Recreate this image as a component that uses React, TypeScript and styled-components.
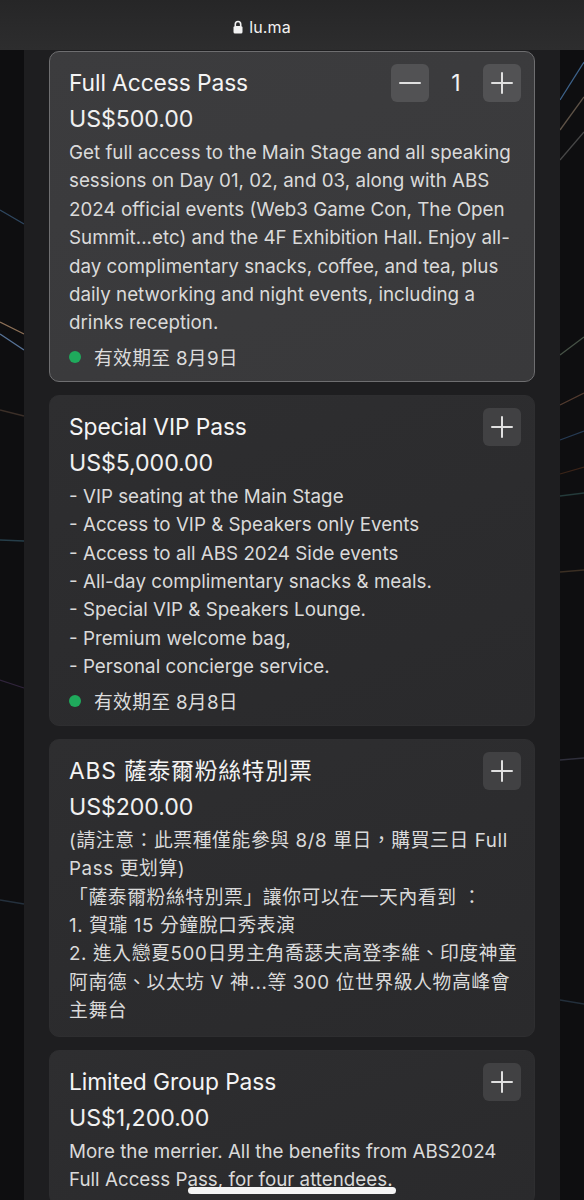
import React from "react";
import styled, { createGlobalStyle } from "styled-components";

const GlobalStyle = createGlobalStyle`
  html, body {
    margin: 0;
    padding: 0;
    background: #0f0f11;
  }
  body {
    font-family: Inter, "Noto Sans", "Noto Sans CJK TC", sans-serif;
    -webkit-font-smoothing: antialiased;
  }
`;

const Page = styled.div`
  position: relative;
  width: 584px;
  height: 1200px;
  overflow: hidden;
  background: #0e0e10;
`;

const Streaks = styled.svg`
  position: absolute;
  top: 0;
  left: 0;
  width: 584px;
  height: 1200px;
  z-index: 0;
`;

const Content = styled.div`
  position: relative;
  z-index: 1;
  display: flex;
  flex-direction: column;
  height: 100%;
`;

const AddressBar = styled.div`
  height: 50px;
  flex-shrink: 0;
  background: linear-gradient(180deg, #262627 0%, #2d2d2e 100%);
  display: flex;
  align-items: center;
  justify-content: center;
  gap: 6px;
  padding: 4px 60px 0 0;
  box-sizing: border-box;
  color: #f2f2f2;
  font-family: Inter, "Liberation Sans", sans-serif;
  font-size: 16px;
  letter-spacing: 0.1px;
`;

const Column = styled.div`
  flex: 1;
  margin: 0 24px;
  background: #1e1e20;
  padding: 1px 25px 0;
  display: flex;
  flex-direction: column;
  gap: 13px;
`;

const Card = styled.div<{ $active?: boolean }>`
  border-radius: 10px;
  padding: 16px 13px 10px 19px;
  background: ${(p) =>
    p.$active
      ? "linear-gradient(160deg, #3c3c3e 0%, #39393b 100%)"
      : "linear-gradient(160deg, #2e2e30 0%, #2a2a2c 100%)"};
  border: 1px solid ${(p) => (p.$active ? "#6e6e70" : "#2e2e30")};
  color: #e6e6e6;
`;

const Header = styled.div`
  display: flex;
  justify-content: space-between;
  align-items: flex-start;
  height: 30px;
`;

const Title = styled.div<{ $cjk?: boolean }>`
  font-size: 22.8px;
  line-height: 30px;
  color: #f4f4f4;
  letter-spacing: ${(p) => (p.$cjk ? "0.8px" : "-0.1px")};
`;

const Stepper = styled.div`
  display: flex;
  align-items: center;
  margin-top: -4px;
`;

const StepButton = styled.div<{ $active?: boolean }>`
  width: 38px;
  height: 38px;
  border-radius: 6px;
  background: ${(p) => (p.$active ? "#525254" : "#414143")};
  display: flex;
  align-items: center;
  justify-content: center;
`;

const Count = styled.div`
  width: 54px;
  text-align: center;
  font-size: 23px;
  color: #f2f2f2;
`;

const Price = styled.div`
  font-size: 23.2px;
  line-height: 32px;
  margin-top: 5px;
  color: #f0f0f0;
  letter-spacing: -0.1px;
`;

const Body = styled.div<{ $cjk?: boolean }>`
  margin-top: 4px;
  font-size: 18.8px;
  line-height: 28.4px;
  color: #dadada;
  padding-right: 4px;
  white-space: nowrap;
  letter-spacing: ${(p) => (p.$cjk ? "0.6px" : "0")};
`;

const Line = styled.div``;

const Status = styled.div`
  display: flex;
  align-items: center;
  gap: 13px;
  margin-top: 5px;
  height: 28px;
  font-size: 18.8px;
  color: #dcdcdc;
  letter-spacing: 0.3px;
`;

const Dot = styled.span`
  width: 12px;
  height: 12px;
  border-radius: 50%;
  background: #1faa5c;
`;

const HomeIndicator = styled.div`
  position: absolute;
  left: 188px;
  bottom: 6px;
  width: 208px;
  height: 7px;
  border-radius: 4px;
  background: #f4f4f4;
  z-index: 2;
`;

const PlusIcon = () => (
  <svg width="22" height="22" viewBox="0 0 22 22">
    <path d="M11 1v20M1 11h20" stroke="#e0e0e0" strokeWidth="2" strokeLinecap="round" />
  </svg>
);

const MinusIcon = () => (
  <svg width="22" height="22" viewBox="0 0 22 22">
    <path d="M1 11h20" stroke="#e0e0e0" strokeWidth="2" strokeLinecap="round" />
  </svg>
);

const LockIcon = () => (
  <svg width="10" height="14" viewBox="0 0 10 14">
    <path d="M2.3 6V4.2a2.7 2.7 0 0 1 5.4 0V6" fill="none" stroke="#f2f2f2" strokeWidth="1.6" />
    <rect x="0.5" y="6" width="9" height="7.5" rx="1.5" fill="#f2f2f2" />
  </svg>
);

interface Ticket {
  title: string;
  price: string;
  lines: string[];
  valid?: string;
  count?: number;
  cjk?: boolean;
}

const tickets: Ticket[] = [
  {
    title: "Full Access Pass",
    price: "US$500.00",
    count: 1,
    lines: [
      "Get full access to the Main Stage and all speaking",
      "sessions on Day 01, 02, and 03, along with ABS",
      "2024 official events (Web3 Game Con, The Open",
      "Summit...etc) and the 4F Exhibition Hall. Enjoy all-",
      "day complimentary snacks, coffee, and tea, plus",
      "daily networking and night events, including a",
      "drinks reception.",
    ],
    valid: "有效期至 8月9日",
  },
  {
    title: "Special VIP Pass",
    price: "US$5,000.00",
    lines: [
      "- VIP seating at the Main Stage",
      "- Access to VIP & Speakers only Events",
      "- Access to all ABS 2024 Side events",
      "- All-day complimentary snacks & meals.",
      "- Special VIP & Speakers Lounge.",
      "- Premium welcome bag,",
      "- Personal concierge service.",
    ],
    valid: "有效期至 8月8日",
  },
  {
    title: "ABS 薩泰爾粉絲特別票",
    price: "US$200.00",
    cjk: true,
    lines: [
      "(請注意：此票種僅能參與 8/8 單日，購買三日 Full",
      "Pass 更划算)",
      "「薩泰爾粉絲特別票」讓你可以在一天內看到 ：",
      "1. 賀瓏 15 分鐘脫口秀表演",
      "2. 進入戀夏500日男主角喬瑟夫高登李維、印度神童",
      "阿南德、以太坊 V 神...等 300 位世界級人物高峰會",
      "主舞台",
    ],
  },
  {
    title: "Limited Group Pass",
    price: "US$1,200.00",
    lines: [
      "More the merrier. All the benefits from ABS2024",
      "Full Access Pass, for four attendees.",
    ],
  },
];

const streaks = [
  { x1: 0, y1: 210, x2: 24, y2: 224, c: "#3a5a7a" },
  { x1: 0, y1: 322, x2: 24, y2: 334, c: "#b89270" },
  { x1: 0, y1: 334, x2: 24, y2: 350, c: "#7096c6" },
  { x1: 0, y1: 410, x2: 24, y2: 416, c: "#4a3a30" },
  { x1: 0, y1: 540, x2: 24, y2: 541, c: "#2e4f5e" },
  { x1: 0, y1: 680, x2: 24, y2: 688, c: "#3c2c4a" },
  { x1: 0, y1: 900, x2: 24, y2: 904, c: "#2c3c4c" },
  { x1: 560, y1: 100, x2: 584, y2: 62, c: "#4d7fb4" },
  { x1: 560, y1: 130, x2: 584, y2: 97, c: "#7a6a5a" },
  { x1: 560, y1: 160, x2: 584, y2: 132, c: "#5a5a5a" },
  { x1: 560, y1: 355, x2: 584, y2: 337, c: "#5a6a5a" },
  { x1: 560, y1: 405, x2: 584, y2: 393, c: "#6a4a3a" },
  { x1: 560, y1: 440, x2: 584, y2: 431, c: "#2e4a6a" },
  { x1: 560, y1: 474, x2: 584, y2: 467, c: "#4a2c1c" },
  { x1: 560, y1: 496, x2: 584, y2: 493, c: "#2c4a4a" },
  { x1: 560, y1: 572, x2: 584, y2: 570, c: "#4a3a2a" },
  { x1: 560, y1: 760, x2: 584, y2: 758, c: "#3a3a4a" },
  { x1: 560, y1: 1000, x2: 584, y2: 1004, c: "#2a3a4a" },
];

export default function App() {
  return (
    <Page>
      <GlobalStyle />
      <Streaks viewBox="0 0 584 1200">
        {streaks.map((s, i) => (
          <line key={i} x1={s.x1} y1={s.y1} x2={s.x2} y2={s.y2} stroke={s.c} strokeWidth="1.3" opacity="0.75" />
        ))}
      </Streaks>
      <Content>
        <AddressBar>
          <LockIcon />
          <span>lu.ma</span>
        </AddressBar>
        <Column>
          {tickets.map((t, i) => (
            <Card key={i} $active={t.count !== undefined}>
              <Header>
                <Title $cjk={t.cjk}>{t.title}</Title>
                {t.count !== undefined ? (
                  <Stepper>
                    <StepButton $active>
                      <MinusIcon />
                    </StepButton>
                    <Count>{t.count}</Count>
                    <StepButton $active>
                      <PlusIcon />
                    </StepButton>
                  </Stepper>
                ) : (
                  <Stepper>
                    <StepButton>
                      <PlusIcon />
                    </StepButton>
                  </Stepper>
                )}
              </Header>
              <Price>{t.price}</Price>
              <Body $cjk={t.cjk}>
                {t.lines.map((l, j) => (
                  <Line key={j}>{l}</Line>
                ))}
              </Body>
              {t.valid && (
                <Status>
                  <Dot />
                  <span>{t.valid}</span>
                </Status>
              )}
            </Card>
          ))}
        </Column>
      </Content>
      <HomeIndicator />
    </Page>
  );
}
